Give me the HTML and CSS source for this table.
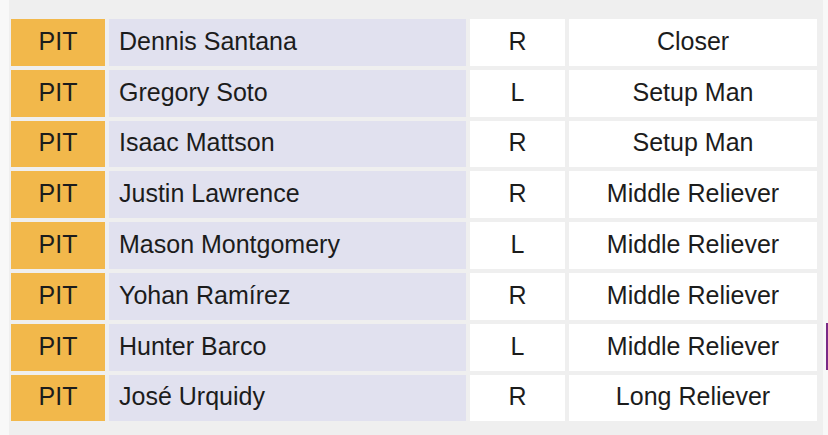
FILE: index.html
```html
<!DOCTYPE html>
<html>
<head>
<meta charset="utf-8">
<link rel="stylesheet" href="styles.css">
</head>
<body>
<div class="wrap">
  <table class="roster">
    <colgroup>
      <col class="c-team"><col class="c-name"><col class="c-hand"><col class="c-role">
    </colgroup>
    <tbody>
      <tr><td class="team">PIT</td><td class="name">Dennis Santana</td><td class="hand">R</td><td class="role">Closer</td></tr>
      <tr><td class="team">PIT</td><td class="name">Gregory Soto</td><td class="hand">L</td><td class="role">Setup Man</td></tr>
      <tr><td class="team">PIT</td><td class="name">Isaac Mattson</td><td class="hand">R</td><td class="role">Setup Man</td></tr>
      <tr><td class="team">PIT</td><td class="name">Justin Lawrence</td><td class="hand">R</td><td class="role">Middle Reliever</td></tr>
      <tr><td class="team">PIT</td><td class="name">Mason Montgomery</td><td class="hand">L</td><td class="role">Middle Reliever</td></tr>
      <tr><td class="team">PIT</td><td class="name">Yohan Ramírez</td><td class="hand">R</td><td class="role">Middle Reliever</td></tr>
      <tr><td class="team">PIT</td><td class="name">Hunter Barco</td><td class="hand">L</td><td class="role">Middle Reliever</td></tr>
      <tr><td class="team">PIT</td><td class="name">José Urquidy</td><td class="hand">R</td><td class="role">Long Reliever</td></tr>
    </tbody>
  </table>
</div>
<div class="marker"></div>
</body>
</html>
```

FILE: styles.css
```css
html, body {
  margin: 0;
  padding: 0;
}
body {
  background: #f8f8f8;
  width: 828px;
  height: 435px;
  overflow: hidden;
  position: relative;
  font-family: "Liberation Sans", Arial, sans-serif;
}
.wrap {
  margin-left: 9px;
  width: 814px;
  height: 435px;
  background: #efefef;
  padding-top: 15px;
  box-sizing: border-box;
}
.roster {
  table-layout: fixed;
  border-collapse: separate;
  border-spacing: 4px;
  width: 814px;
  margin-left: -2px;
}
.c-team { width: 94px; }
.c-name { width: 357px; }
.c-hand { width: 95px; }
.c-role { width: 248px; }
.roster td {
  height: 46.8px;
  padding: 0 0 2px 0;
  box-sizing: border-box;
  font-size: 25px;
  color: #1c1c1c;
  vertical-align: middle;
  white-space: nowrap;
}
.team {
  background: #f2b84b;
  text-align: center;
}
.name {
  background: #e1e1ef;
  text-align: left;
  padding-left: 10px !important;
}
.hand, .role {
  background: #ffffff;
  text-align: center;
}
.marker {
  position: absolute;
  left: 826px;
  top: 323px;
  width: 2px;
  height: 47px;
  background: #7a2a86;
}
```
